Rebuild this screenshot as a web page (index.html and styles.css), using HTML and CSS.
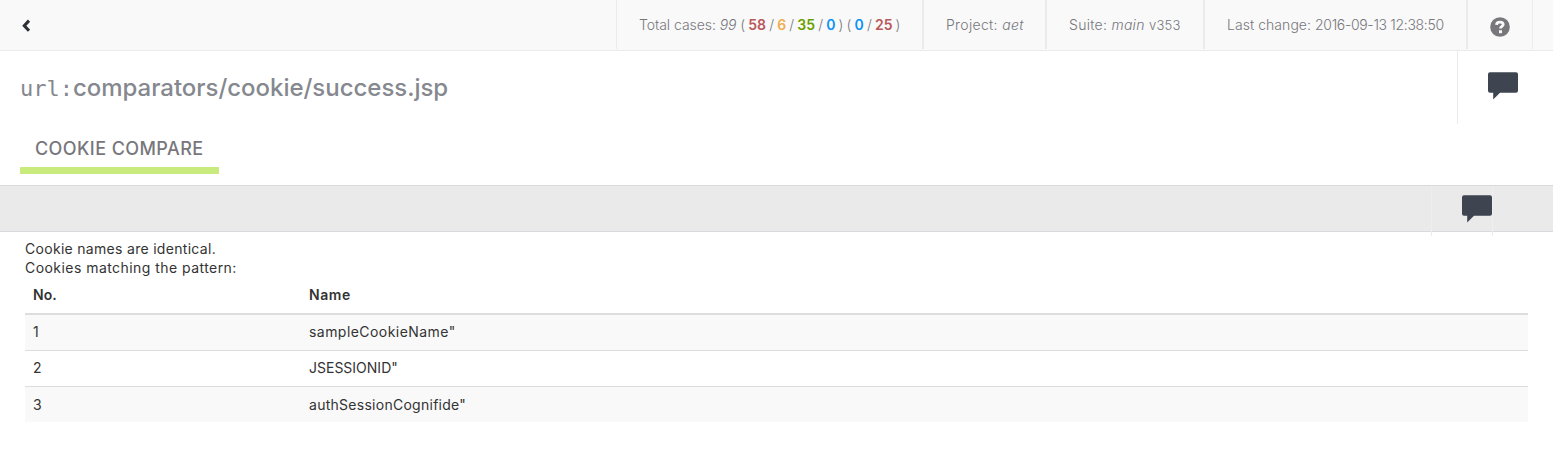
FILE: index.html
```html
<!DOCTYPE html>
<html lang="en">
<head>
<meta charset="utf-8">
<title>Cookie compare</title>
<link rel="stylesheet" href="styles.css">
</head>
<body>
<header class="toolbar">
  <a class="back" href="#" aria-label="Back"><svg width="10" height="14" viewBox="0 0 10 14"><path d="M8 1.6 3.3 6.7 8 11.8" fill="none" stroke="#2d3035" stroke-width="3.1"/></svg></a>
  <ul class="info">
    <li class="cell cases"><span class="label">Total cases: </span><em>99</em> <span class="counts">( <b class="red">58</b> / <b class="orange">6</b> / <b class="green">35</b> / <b class="blue">0</b> ) ( <b class="blue">0</b> / <b class="red">25</b> )</span></li>
    <li class="cell project">Project: <em>aet</em></li>
    <li class="cell suite">Suite: <em>main</em> <small>v353</small></li>
    <li class="cell change">Last change: <span class="date">2016-09-13 12:38:50</span></li>
    <li class="cell help"><svg width="20" height="20" viewBox="0 0 20 20"><circle cx="10" cy="10" r="9.8" fill="#77777c"/><path d="M6.5 7.8c.1-1.8 1.5-2.7 3.5-2.7 1.9 0 3.2.9 3.2 2.4 0 2-2.7 1.9-2.7 4" fill="none" stroke="#f9f9f9" stroke-width="2.8"/><path d="M9 13.2h3v3H9z" fill="#f9f9f9"/></svg></li>
  </ul>
</header>
<section class="heading">
  <h1 class="title"><span class="kind">url:</span><span class="name">comparators/cookie/success.jsp</span></h1>
  <div class="note"><svg width="30" height="28" viewBox="0 0 30 28"><path d="M2 .3h26a2 2 0 0 1 2 2v16.4a2 2 0 0 1-2 2H12l-6.8 6.8v-6.8H2a2 2 0 0 1-2-2V2.3a2 2 0 0 1 2-2z" fill="#3e4550"/></svg></div>
</section>
<nav class="tabs"><a class="tab" href="#"><span class="tab-text">COOKIE COMPARE</span></a></nav>
<div class="strip"><div class="strip-note"><svg width="30" height="28" viewBox="0 0 30 28"><path d="M2 .3h26a2 2 0 0 1 2 2v16.4a2 2 0 0 1-2 2H12l-6.8 6.8v-6.8H2a2 2 0 0 1-2-2V2.3a2 2 0 0 1 2-2z" fill="#3e4550"/></svg></div></div>
<main class="report">
  <p class="line first">Cookie names are identical.</p>
  <p class="line second">Cookies matching the pattern:</p>
  <table class="cookies">
    <thead><tr><th class="no">No.</th><th class="wider">Name</th></tr></thead>
    <tbody>
      <tr><td>1</td><td class="wide">sampleCookieName"</td></tr>
      <tr><td>2</td><td>JSESSIONID"</td></tr>
      <tr><td>3</td><td class="loose">authSessionCognifide"</td></tr>
    </tbody>
  </table>
</main>
</body>
</html>
```
FILE: styles.css
```css
* { box-sizing: border-box; }
body { margin: 0; background: #fff; color: #333; font: 14px/19px Inter, "Liberation Sans", sans-serif; }
a { color: inherit; text-decoration: none; }
svg { display: block; }

.toolbar { display: flex; justify-content: space-between; height: 51px; background: #f9f9f9; border-bottom: 1px solid #ebebeb; }
.back { padding: 19px 0 0 21px; }
.info { display: flex; margin: 0 20px 0 0; padding: 0; list-style: none; color: #77777c; font-weight: 300; }
.cell { height: 49px; padding: 15px 0 0 22px; border: solid #ebebeb; border-width: 0 1px; white-space: nowrap; }
.cell b { font-weight: 600; }
.cell small { font-size: 13px; }
.cases { width: 307px; letter-spacing: -0.05px; }
.counts { word-spacing: -0.7px; letter-spacing: -0.05px; }
.project { width: 123px; letter-spacing: 0.33px; }
.suite { width: 158px; letter-spacing: 0.28px; }
.change { width: 263px; letter-spacing: 0.05px; }
.date { letter-spacing: -0.32px; }
.help { width: 66px; padding-top: 17px; }
.red { color: #b9575a; }
.orange { color: #f0ad4e; }
.green { color: #6b9f00; }
.blue { color: #0a94f5; }

.heading { display: flex; justify-content: space-between; height: 73px; }
.title { margin: 0; padding: 20px 0 0 20px; color: #85888e; font-size: 24px; line-height: 34px; font-weight: 500; white-space: nowrap; }
.kind { font-family: "DejaVu Sans Mono", monospace; font-size: 22px; font-weight: 400; }
.name { letter-spacing: -0.03px; }
.note { width: 96px; padding: 21px 0 0 30px; border-left: 1px solid #ebebeb; }

.tabs { display: flex; height: 61px; padding-left: 20px; }
.tab { width: 199px; height: 50px; padding: 13px 0 0 15px; border-bottom: 7px solid #c9eb7d; color: #77777c; font-size: 18px; line-height: 24px; font-weight: 450; letter-spacing: 0.42px; white-space: nowrap; }

.strip { display: flex; justify-content: flex-end; height: 47px; padding-right: 60px; background: #eaeaea; border: solid #dadade; border-width: 1px 0; }
.strip-note { width: 62px; height: 50px; padding: 9px 0 0 30px; border: solid #eeeeef; border-width: 0 1px; }

.report { padding: 7px 25px 0; }
.line { margin: 0; }
.first { letter-spacing: 0.3px; }
.second { letter-spacing: 0.45px; }
.cookies { width: 100%; border-collapse: separate; border-spacing: 0; table-layout: fixed; }
.cookies th { height: 38px; padding: 7px 8px 9px; border-bottom: 2px solid #ddd; text-align: left; font-weight: 600; }
.cookies td { height: 36px; padding: 7px 8px 9px; border-bottom: 1px solid #ddd; }
.cookies .no { width: 276px; }
.cookies .wide { letter-spacing: 0.45px; }
.cookies .loose { letter-spacing: 0.27px; }
.cookies .wider { letter-spacing: 0.6px; }
.cookies tbody tr:nth-child(odd) { background: #f9f9f9; }
.cookies tbody tr:last-child td { height: 35px; padding-bottom: 8px; border-bottom: 0; }
```
